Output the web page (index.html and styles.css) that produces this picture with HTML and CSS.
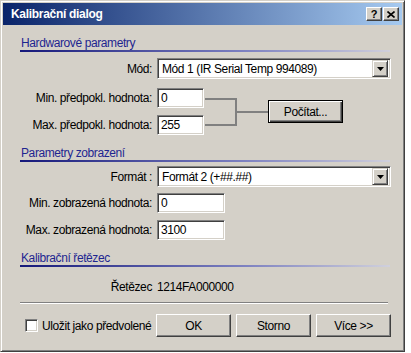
FILE: index.html
```html
<!DOCTYPE html>
<html lang="cs">
    <head>
        <meta charset="UTF-8">
        <title>Kalibrační dialog</title>
        <link rel="stylesheet" href="styles.css">
    </head>
    <body>
        <div class="window">
            <div class="titlebar">
                <span class="title">Kalibrační dialog</span>
                <div class="caption-buttons">
                    <span class="cap-btn">?</span>
                    <span class="cap-btn">
                        <svg width="8" height="7" viewBox="0 0 8 7"><path d="M0.5 0.5 L7.5 6.5 M7.5 0.5 L0.5 6.5" stroke="#000" stroke-width="1.6"/></svg>
                    </span>
                </div>
            </div>
            <div class="content">
                <div class="section first">
                    <div class="section-title">Hardwarové parametry</div>
                    <div class="section-line"></div>
                </div>
                <div class="row combo-row">
                    <span class="label">Mód:</span>
                    <div class="combo">
                        <span class="combo-text">Mód 1 (IR Serial Temp 994089)</span>
                        <span class="combo-btn"><svg width="7" height="4" viewBox="0 0 7 4"><path d="M0 0 H7 L3.5 4 Z" fill="#000"/></svg></span>
                    </div>
                </div>
                <div class="range">
                    <div class="range-fields">
                        <div class="row">
                            <span class="label">Min. předpokl. hodnota:</span>
                            <input class="edit short" type="text" value="0">
                        </div>
                        <div class="row">
                            <span class="label">Max. předpokl. hodnota:</span>
                            <input class="edit short" type="text" value="255">
                        </div>
                    </div>
                    <div class="bracket"></div>
                    <div class="link"></div>
                    <button class="btn default">Počítat...</button>
                </div>
                <div class="section">
                    <div class="section-title">Parametry zobrazení</div>
                    <div class="section-line"></div>
                </div>
                <div class="row combo-row format-row">
                    <span class="label">Formát :</span>
                    <div class="combo">
                        <span class="combo-text">Formát 2 (+##.##)</span>
                        <span class="combo-btn"><svg width="7" height="4" viewBox="0 0 7 4"><path d="M0 0 H7 L3.5 4 Z" fill="#000"/></svg></span>
                    </div>
                </div>
                <div class="row display-min">
                    <span class="label">Min. zobrazená hodnota:</span>
                    <input class="edit medium" type="text" value="0">
                </div>
                <div class="row display-max">
                    <span class="label">Max. zobrazená hodnota:</span>
                    <input class="edit medium" type="text" value="3100">
                </div>
                <div class="section">
                    <div class="section-title">Kalibrační řetězec</div>
                    <div class="section-line"></div>
                </div>
                <div class="row string-row">
                    <span class="label">Řetězec</span>
                    <span class="value">1214FA000000</span>
                </div>
                <div class="separator"></div>
                <div class="footer">
                    <div class="check-group">
                        <span class="checkbox"></span>
                        <span>Uložit jako předvolené</span>
                    </div>
                    <div class="buttons">
                        <button class="btn">OK</button>
                        <button class="btn">Storno</button>
                        <button class="btn">Více &gt;&gt;</button>
                    </div>
                </div>
            </div>
        </div>
    </body>
</html>
```

FILE: styles.css
```css
* { box-sizing: border-box; }
body {
    margin: 0;
    background: #fff;
    font-family: "Liberation Sans", Arial, sans-serif;
    font-size: 12px;
    letter-spacing: -0.4px;
    color: #000;
}
.window {
    width: 405px;
    height: 352px;
    background: #d4d0c8;
    border: 1px solid;
    border-color: #d4d0c8 #404040 #404040 #d4d0c8;
    box-shadow: inset 1px 1px #fff, inset -1px -1px #808080;
    padding: 2px;
}
.titlebar {
    height: 22px;
    display: flex;
    align-items: center;
    justify-content: space-between;
    padding: 0 3px 0 8px;
    background: linear-gradient(to right, #0a246a, #a6caf0);
}
.title {
    color: #fff;
    font-weight: bold;
    letter-spacing: -0.3px;
}
.caption-buttons { display: flex; gap: 1px; }
.cap-btn {
    width: 16px;
    height: 14px;
    display: flex;
    align-items: center;
    justify-content: center;
    background: #d4d0c8;
    border: 1px solid;
    border-color: #fff #404040 #404040 #fff;
    box-shadow: inset -1px -1px #808080;
    font-weight: bold;
    font-size: 11px;
    letter-spacing: 0;
    line-height: 1;
}
.section { margin-top: 11px; }
.section-title {
    margin-left: 18px;
    line-height: 14px;
    color: #1e2590;
}
.section-line {
    margin-left: 17px;
    width: 370px;
    height: 2px;
    background: linear-gradient(to right, #15187a, #7c80c0 60%, #d0d0dc);
}
.row {
    display: flex;
    align-items: center;
    height: 20px;
}
.label {
    width: 149px;
    margin-right: 5px;
    text-align: right;
}
.combo-row { margin-top: 6px; height: 21px; }
.format-row { margin-top: 4px; }
.combo {
    width: 234px;
    height: 21px;
    display: flex;
    align-items: center;
    justify-content: space-between;
    background: #fff;
    border: 1px solid;
    border-color: #808080 #fff #fff #808080;
    box-shadow: inset 1px 1px #404040, inset -1px -1px #d4d0c8;
    padding: 2px;
}
.combo-text { padding-left: 2px; }
.combo-btn {
    width: 16px;
    height: 17px;
    display: flex;
    align-items: center;
    justify-content: center;
    background: #d4d0c8;
    border: 1px solid;
    border-color: #d4d0c8 #404040 #404040 #d4d0c8;
    box-shadow: inset 1px 1px #fff, inset -1px -1px #808080;
}
.edit {
    height: 20px;
    margin: 0;
    padding: 0 3px;
    font: inherit;
    letter-spacing: inherit;
    background: #fff;
    border: 1px solid;
    border-color: #808080 #fff #fff #808080;
    box-shadow: inset 1px 1px #404040, inset -1px -1px #d4d0c8;
    outline: none;
}
.short { width: 47px; }
.medium { width: 68px; }
.range {
    margin-top: 9px;
    display: flex;
    align-items: center;
}
.range-fields {
    display: flex;
    flex-direction: column;
    gap: 7px;
}
.bracket {
    width: 32px;
    height: 28px;
    margin-left: 1px;
    border: 2px solid #808080;
    border-left: none;
}
.link {
    width: 31px;
    height: 2px;
    background: #808080;
}
.btn {
    width: 75px;
    height: 23px;
    padding: 0;
    font: inherit;
    letter-spacing: inherit;
    color: #000;
    background: #d4d0c8;
    border: 1px solid;
    border-color: #fff #404040 #404040 #fff;
    box-shadow: inset -1px -1px #808080;
}
.btn.default {
    border: 1px solid #000;
    box-shadow: inset 1px 1px #fff, inset -1px -1px #404040, inset -2px -2px #808080;
}
.display-min { margin-top: 6px; }
.display-max { margin-top: 7px; }
.string-row { margin-top: 13px; height: 14px; }
.string-row .label { margin-right: 5px; }
.separator {
    margin-top: 8px;
    margin-left: 17px;
    width: 368px;
    border-top: 1px solid #808080;
    border-bottom: 1px solid #fff;
}
.footer {
    margin-top: 10px;
    display: flex;
    align-items: center;
}
.check-group {
    width: 153px;
    padding-left: 22px;
    display: flex;
    align-items: center;
    gap: 4px;
}
.checkbox {
    width: 13px;
    height: 13px;
    background: #fff;
    border: 1px solid;
    border-color: #808080 #fff #fff #808080;
    box-shadow: inset 1px 1px #404040, inset -1px -1px #d4d0c8;
}
.buttons { display: flex; gap: 5px; }
```
